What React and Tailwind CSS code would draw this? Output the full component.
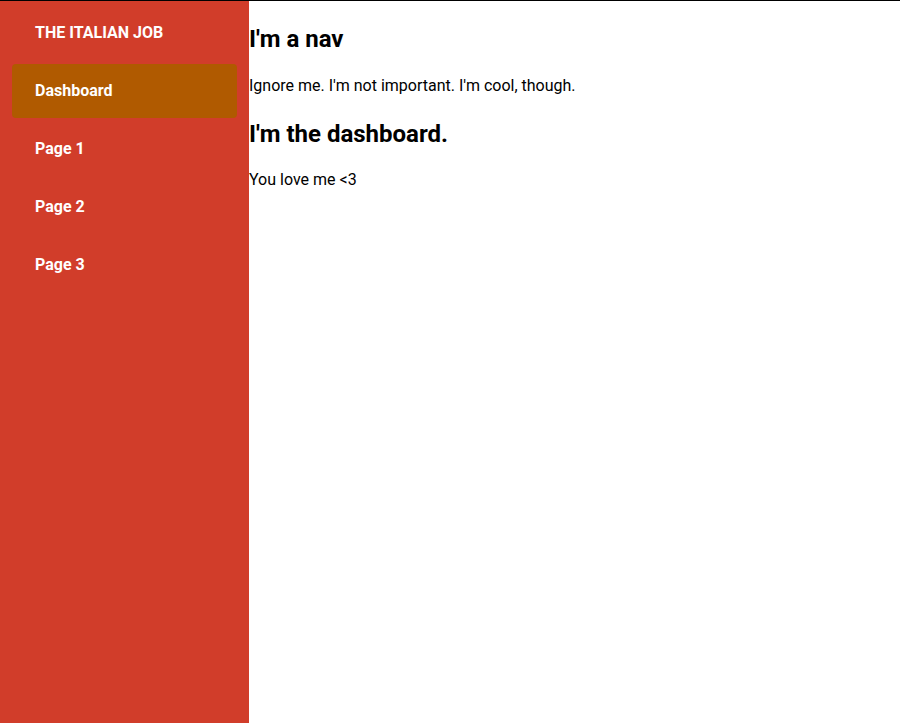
const items = ["Dashboard", "Page 1", "Page 2", "Page 3"];

const Sidebar = () => {
  return (
    <aside className="w-[249px] shrink-0 bg-[#d13d2a] px-3 pt-[5px] flex flex-col gap-1 text-white font-bold text-base">
      <div className="h-[54px] flex items-center pl-[23px]">THE ITALIAN JOB</div>
      {items.map((item, i) => (
        <a
          key={item}
          href="#"
          className={
            i === 0
              ? "h-[54px] flex items-center pl-[23px] rounded bg-[#b05a00]"
              : "h-[54px] flex items-center pl-[23px] rounded"
          }
        >
          {item}
        </a>
      ))}
    </aside>
  );
};

export default function App() {
  return (
    <div
      className="h-screen flex border-t border-black bg-white text-black"
      style={{ fontFamily: "Roboto, 'Liberation Sans', sans-serif" }}
    >
      <Sidebar />
      <main className="flex-1">
        <h2 className="mt-[22px] text-[24px] leading-8 font-bold">I'm a nav</h2>
        <p className="mt-[19px] text-base leading-6">Ignore me. I'm not important. I'm cool, though.</p>
        <h2 className="mt-[20px] text-[24px] leading-8 font-bold">I'm the dashboard.</h2>
        <p className="mt-[18px] text-base leading-6">You love me &lt;3</p>
      </main>
    </div>
  );
}
